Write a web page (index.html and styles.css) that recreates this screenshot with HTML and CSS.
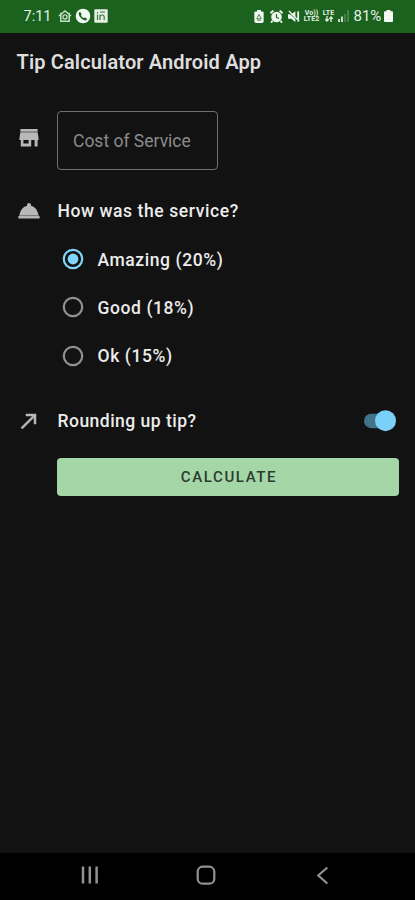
FILE: index.html
```html
<!DOCTYPE html>
<html lang="en">
<head>
<meta charset="utf-8">
<meta name="viewport" content="width=device-width, initial-scale=1">
<title>Tip Calculator Android App</title>
<link rel="stylesheet" href="styles.css">
</head>
<body>
<div class="phone">
  <div class="status">
    <span class="clock">7:11</span>
    <svg class="s-home" viewBox="0 0 15 14"><path d="M1 7 7.5 1.5 14 7M3 6v6.5h9V6M3 3.5v2M12 3.5v2" fill="none" stroke="#c5dfc6" stroke-width="1.6"/><circle cx="7.5" cy="8" r="2.2" fill="none" stroke="#c5dfc6" stroke-width="1.4"/></svg>
    <svg class="s-call" viewBox="0 0 16 16"><circle cx="8" cy="8" r="7.3" fill="#f2f8f2"/><path d="M5 3.8 6.6 5.9 6 7.2C6.5 8.6 7.4 9.5 8.8 10L10.1 9.4 12.2 11 11 12.4C7.3 12.4 3.7 8.7 3.7 5z" fill="#1b5e20"/></svg>
    <svg class="s-news" viewBox="0 0 14 14"><rect x=".3" y=".3" width="13.4" height="13.4" rx="1" fill="#e4f0e4"/><path d="M3.5 3v1.3M3.5 5.6V11M6 11V5.7M6 8q0-2 2.1-2t2.1 2v3M6 3h5" fill="none" stroke="#3d7541" stroke-width="1.2"/></svg>
    <span class="gap"></span>
    <svg class="s-saver" viewBox="0 0 10 14"><path d="M3 0h4v1.5h1.5Q10 1.5 10 3v9.2Q10 14 8.2 14H1.8Q0 14 0 12.2V3Q0 1.5 1.5 1.5H3z" fill="#f2f8f2"/><path d="M5 4.7 2.5 9.5h5zM3 11h4" fill="none" stroke="#3b7b40" stroke-width="1"/></svg>
    <svg class="s-alarm" viewBox="0 0 13 13"><path d="M.4 3.2 3.4.6M12.6 3.2 9.6.6M2.6 10.8 1 12.6M10.4 10.8l1.6 1.8" stroke="#eef6ee" stroke-width="1.9"/><circle cx="6.5" cy="7" r="5.3" fill="#eef6ee"/><path d="M6.5 4v3.4L9 8.6" fill="none" stroke="#1b5e20" stroke-width="1.1"/></svg>
    <svg class="s-mute" viewBox="0 0 13 13"><path d="M0 4h3.5L8 .8v11.6L3.5 9H0z" fill="#eef6ee"/><path d="M11 1v11" stroke="#eef6ee" stroke-width="2"/><path d="m0 1.5 11 10" stroke="#1b5e20" stroke-width="1"/><path d="m1 .5 11 11" stroke="#eef6ee" stroke-width="1.4"/></svg>
    <span class="net volte"><span>Vo))</span><span>LTE2</span></span>
    <span class="net lte"><span>LTE</span><svg viewBox="0 0 8 6"><path d="M2 0v5M.3 3.3 2 5l1.7-1.7M6 6V1M4.3 2.7 6 1l1.7 1.7" fill="none" stroke="#e4f0e4" stroke-width="1.3"/></svg></span>
    <svg class="s-signal" viewBox="0 0 11 12"><path d="M1 9v3M4 6.5V12" stroke="#d8e9d8" stroke-width="1.8"/><path d="M7 4v8M10 0v12" stroke="#578d5a" stroke-width="1.4"/></svg>
    <span class="percent">81%</span>
    <svg class="s-batt" viewBox="0 0 9 12"><path d="M2.5 0h4v1.3H8q1 0 1 1V11q0 1-1 1H1q-1 0-1-1V2.3q0-1 1-1h1.5z" fill="#f2f8f2"/></svg>
  </div>

  <header class="appbar"><h1>Tip Calculator Android App</h1></header>

  <main>
    <div class="row cost">
      <svg class="icon store" viewBox="0 0 24 24"><path d="M3.4 3h17.2v2.8H3.4zM3.4 6.2h17.2l1 6.2v1.6h-1V20.4H17.6V14H14.2v6.4H3.8V14H2.4v-1.6zM6.4 14v3.6h5.2V14z" fill-rule="evenodd"/><path class="seam" d="M3.4 6h17.2"/></svg>
      <div class="field">Cost of Service</div>
    </div>
    <div class="row question">
      <svg class="icon bell" viewBox="0 0 24 24"><path d="M1.4 17h21.2v2.4H1.4zM13.84 6.79c.1-.24.16-.51.16-.79 0-1.1-.9-2-2-2s-2 .9-2 2c0 .28.06.55.16.79C6.25 7.6 3.27 10.93 2.4 16.4h19.2c-.87-5.47-3.85-8.8-7.76-9.61z"/><path class="seam" d="M2 16.7h20"/></svg>
      <span class="label">How was the service?</span>
    </div>
    <div class="options">
      <div class="option on"><svg viewBox="0 0 22 22"><circle cx="11" cy="11" r="9.2"/><circle class="dot" cx="11" cy="11" r="5.4"/></svg><span>Amazing (20%)</span></div>
      <div class="option"><svg viewBox="0 0 22 22"><circle cx="11" cy="11" r="9.2"/></svg><span>Good (18%)</span></div>
      <div class="option"><svg viewBox="0 0 22 22"><circle cx="11" cy="11" r="9.2"/></svg><span>Ok (15%)</span></div>
    </div>
    <div class="row rounding">
      <svg class="icon arrow" viewBox="0 0 24 24"><path d="M9 5v2h6.59L4 18.59 5.41 20 17 8.41V15h2V5z"/></svg>
      <span class="label">Rounding up tip?</span>
      <svg class="switch" viewBox="0 0 34 22"><rect x="1" y="3.7" width="30" height="14.5" rx="7.25" fill="#437389"/><circle cx="22.5" cy="10.7" r="10.5" fill="#7bd0f8"/></svg>
    </div>
    <div class="calculate"><span>CALCULATE</span></div>
  </main>

  <nav>
    <svg viewBox="0 0 20 20"><path d="M3 1.5v17M9.8 1.5v17M16.6 1.5v17" stroke-width="2.5"/></svg>
    <svg viewBox="0 0 20 20"><rect x="1.7" y="1.7" width="16.6" height="17" rx="5"/></svg>
    <svg viewBox="0 0 20 20"><path d="M14.3 2.5 5.3 10.5l9 8"/></svg>
  </nav>
</div>
</body>
</html>
```
FILE: styles.css
```css
* { box-sizing: border-box; }
body { margin: 0; background: #121212; font-family: Roboto, "Liberation Sans", sans-serif; }
.phone { width: 415px; height: 900px; display: flex; flex-direction: column; background: #121212; }
svg { display: block; flex: none; }

.status { height: 32.5px; flex: none; display: flex; align-items: center; padding-left: 23.5px; background: #1b621f; color: #e4f0e4; }
.clock { width: 34.5px; font-size: 14.5px; }
.s-home { width: 14px; height: 14px; }
.s-call { width: 16px; height: 16px; margin-left: 3px; }
.s-news { width: 14px; height: 14px; margin-left: 3px; }
.gap { width: 146px; }
.s-saver { width: 10px; height: 13px; }
.s-alarm { width: 13px; height: 13px; margin-left: 6px; }
.s-mute { width: 12px; height: 13px; margin-left: 5px; }
.net { display: flex; flex-direction: column; align-items: center; font-size: 7px; line-height: 6.5px; font-weight: 700; height: 13px; }
.volte { width: 17px; margin-left: 3px; }
.lte { width: 13px; margin-left: 2px; }
.lte svg { width: 8px; height: 6px; }
.s-signal { width: 11px; height: 12px; margin-left: 3px; }
.percent { width: 30.5px; margin-left: 4.5px; font-size: 15px; white-space: nowrap; }
.s-batt { width: 9px; height: 12px; }

.appbar { height: 58.5px; flex: none; display: flex; align-items: center; padding-left: 16.5px; }
h1 { margin: 0; font-size: 20px; font-weight: 600; letter-spacing: .14px; color: #dedede; white-space: nowrap; }

main { flex: 1; padding: 20px 16px 0 16.5px; }
.row { display: flex; align-items: center; }
.icon { width: 24px; height: 24px; margin-right: 17px; fill: #b8b8b8; }
.store { margin-bottom: 5px; }
.seam { stroke: #8c8c8c; stroke-width: .8; }
.arrow path { stroke: #b8b8b8; stroke-width: .5; }
.cost { height: 59px; }
.field { width: 161px; height: 59px; margin-left: -.5px; padding-left: 15px; border: 1px solid #707070; border-radius: 4px; line-height: 58px; font-size: 17.5px; color: #8b8b8b; }
.question { height: 24px; margin-top: 28.7px; }
.label, .option { font-size: 17.5px; font-weight: 500; letter-spacing: .58px; color: #ececec; white-space: nowrap; }
.options { padding: 12.3px 0 0 45.5px; }
.option { height: 48.3px; display: flex; align-items: center; gap: 13.5px; }
.option span { padding-top: 1px; }
.option svg { width: 22px; height: 22px; }
.option circle { fill: none; stroke: #929292; stroke-width: 2.2; }
.on circle { stroke: #81d4fa; }
.option .dot { fill: #81d4fa; stroke: none; }
.rounding { height: 24px; margin-top: 29.2px; }
.rounding .label { letter-spacing: .48px; }
.switch { width: 34px; height: 22px; margin: 0 2px 0 auto; }
.calculate { height: 38px; margin: 25px 0 0 40.5px; padding-left: 2px; display: flex; align-items: center; justify-content: center; border-radius: 4px; background: #a5d6a7; color: #2c3b2e; font-size: 15px; font-weight: 500; letter-spacing: 1.6px; }

nav { height: 47.5px; flex: none; display: flex; align-items: center; justify-content: space-between; padding: 0 82.5px 2px 79.5px; background: #000; }
nav svg { width: 20px; height: 20px; fill: none; stroke: #929292; stroke-width: 2.2; }
```
